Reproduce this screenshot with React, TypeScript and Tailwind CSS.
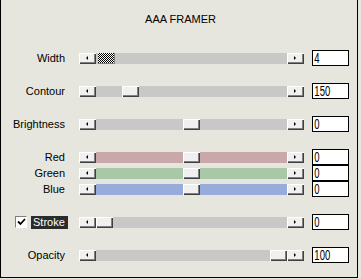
const font = "font-['Liberation_Sans',Arial,sans-serif]";

type Row = {
  label: string;
  thumb: number;
  value: string;
  track: string;
  checker?: boolean;
  check?: boolean;
  gap: boolean;
};

const rows: Row[] = [
  { label: "Width", thumb: 2, value: "4", track: "bg-[#c8c8c8]", checker: true, gap: true },
  { label: "Contour", thumb: 26, value: "150", track: "bg-[#c8c8c8]", gap: true },
  { label: "Brightness", thumb: 87, value: "0", track: "bg-[#c8c8c8]", gap: true },
  { label: "Red", thumb: 87, value: "0", track: "bg-[#c8a8a8]", gap: true },
  { label: "Green", thumb: 87, value: "0", track: "bg-[#a8c8a8]", gap: false },
  { label: "Blue", thumb: 87, value: "0", track: "bg-[#98acdc]", gap: false },
  { label: "Stroke", thumb: 0, value: "0", track: "bg-[#c8c8c8]", check: true, gap: true },
  { label: "Opacity", thumb: 174, value: "100", track: "bg-[#c8c8c8]", gap: true },
];

const bevel =
  "bg-[#f0f0f0] shadow-[inset_1px_1px_#ffffff,inset_-1px_-1px_#404040,inset_-2px_-2px_#808080]";

function ArrowButton({ dir }: { dir: "l" | "r" }) {
  return (
    <div className={`w-[17px] h-[11px] shrink-0 flex items-center justify-center ${bevel}`}>
      {dir === "l" ? (
        <div className="w-0 h-0 border-y-[2px] border-y-transparent border-r-[2px] border-r-black -ml-[2px]" />
      ) : (
        <div className="w-0 h-0 border-y-[2px] border-y-transparent border-l-[2px] border-l-black -ml-[1px]" />
      )}
    </div>
  );
}

function Slider({ row }: { row: Row }) {
  return (
    <div className="flex w-[225px] h-[11px] ml-[14px]">
      <ArrowButton dir="l" />
      <div className={`relative flex-1 ${row.track}`}>
        {row.checker ? (
          <div
            className="absolute top-0 h-[11px] w-[17px] bg-[repeating-conic-gradient(#000_0_25%,#fff_0_50%)] bg-[length:2px_2px] shadow-[inset_-1px_-1px_#808080]"
            style={{ left: row.thumb }}
          />
        ) : (
          <div className={`absolute top-0 h-[11px] w-[17px] ${bevel}`} style={{ left: row.thumb }} />
        )}
      </div>
      <ArrowButton dir="r" />
    </div>
  );
}

function Label({ row }: { row: Row }) {
  if (row.check) {
    return (
      <div className="w-[64px] shrink-0 flex items-center pl-[14px]">
        <div className="w-[12px] h-[12px] shrink-0 bg-white border border-[#808080] border-b-white border-r-white flex items-center justify-center">
          <svg width="9" height="8" viewBox="0 0 9 8">
            <path d="M1 3.5 L3.5 6 L8 1" stroke="#000" strokeWidth="1.8" fill="none" />
          </svg>
        </div>
        <span className="shrink-0 ml-[4px] w-[37px] h-[13px] leading-[13px] bg-[#2b2b2b] text-white pl-[2px]">
          {row.label}
        </span>
      </div>
    );
  }
  return <div className="w-[64px] shrink-0 text-right">{row.label}</div>;
}

export default function App() {
  return (
    <div className={`w-[361px] h-[279px] bg-[#e6e6de] ${font} text-[11px] text-black`}>
      <div className="w-[358px] h-[278px] border-l border-r border-b border-black pt-[12px]">
        <div className="text-center leading-[14px] pl-[3px]">AAA FRAMER</div>
        <div className="mt-[24px] flex flex-col">
          {rows.map((row, i) => (
            <div
              key={row.label}
              className={`flex items-center h-[16px] ${row.gap && i > 0 ? "mt-[17px]" : ""}`}
            >
              <Label row={row} />
              <Slider row={row} />
              <div className="ml-[8px] w-[37px] h-[16px] border border-black bg-white overflow-hidden">
                <div className="text-[14px] leading-[14px] scale-x-[0.68] origin-left pl-[2px]">
                  {row.value}
                </div>
              </div>
            </div>
          ))}
        </div>
      </div>
    </div>
  );
}
